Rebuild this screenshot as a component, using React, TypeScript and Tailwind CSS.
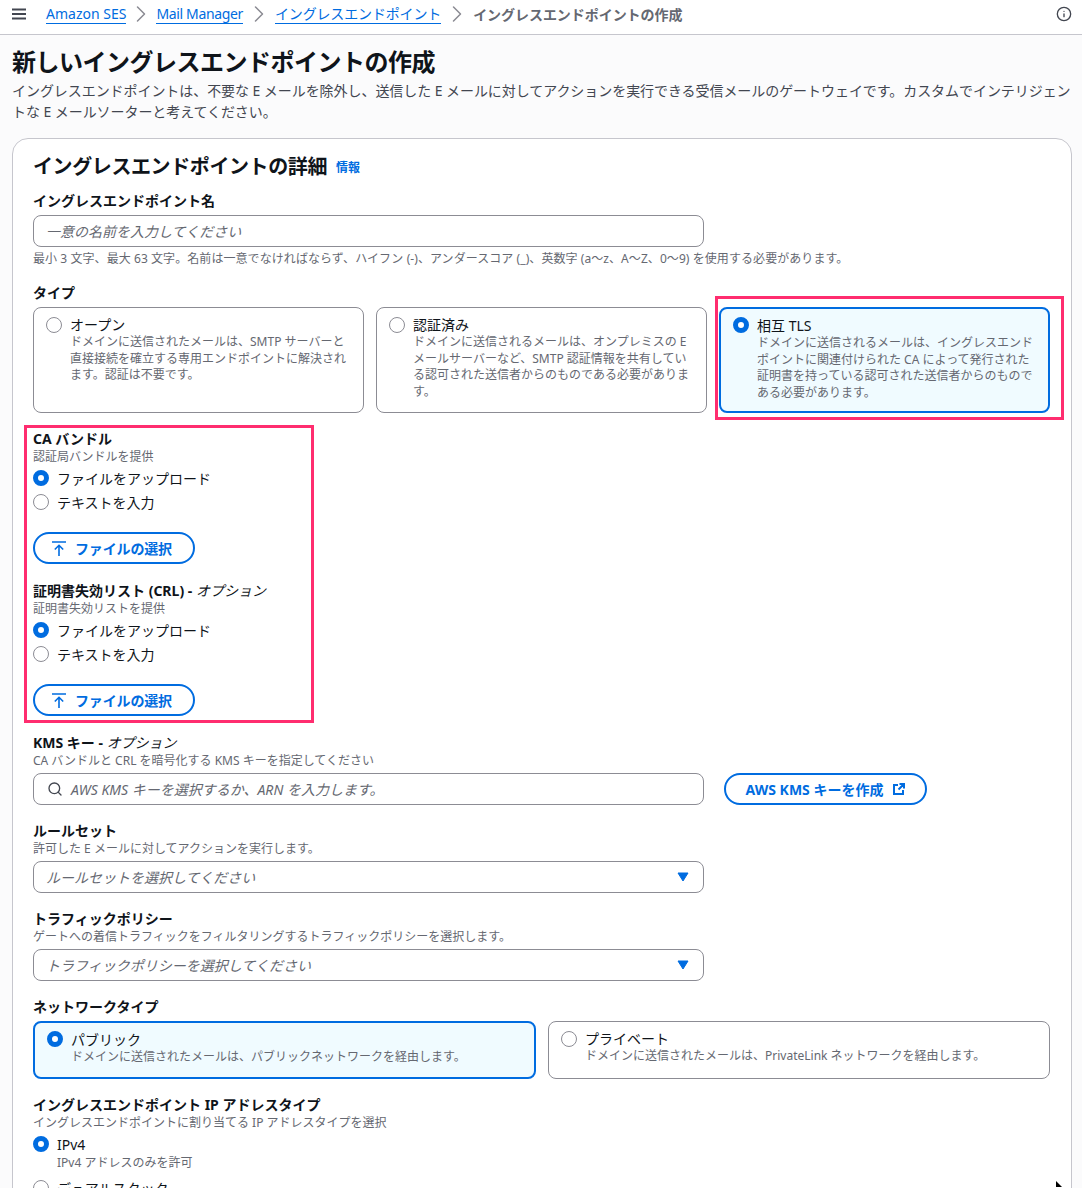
// New ingress endpoint form (SES Mail Manager), with the two pink review annotations on top.
import { ChevronRight, Info, Search } from 'lucide-react'

const FONT = { fontFamily: '"Noto Sans", "Noto Sans CJK JP", sans-serif' }

function Radio({ on }: { on?: boolean }) {
  return on ? (
    <span className="block w-4 h-4 shrink-0 rounded-full border-[5px] border-[#006ce0] bg-white" />
  ) : (
    <span className="block w-4 h-4 shrink-0 rounded-full border border-[#8c8c94] bg-white" />
  )
}

function Label({ children, className = '' }: { children: React.ReactNode; className?: string }) {
  return <div className={`text-[14px] leading-[20px] font-bold text-[#0f141a] ${className}`}>{children}</div>
}

function Sub({ children }: { children: React.ReactNode }) {
  return <div className="text-[12px] leading-[16px] text-[#656871]">{children}</div>
}

function TypeCard({ title, text, on }: { title: string; text: string; on?: boolean }) {
  return (
    <div
      className={`flex gap-2 rounded-lg pl-3 pr-3 pt-[8px] ${
        on ? 'border-2 border-[#006ce0] bg-[#f0fbff]' : 'border border-[#8c8c94] bg-white'
      }`}
    >
      <div className={on ? '' : 'mt-[1px]'}>
        <Radio on={on} />
      </div>
      <div>
        <div className="text-[14px] leading-[18px] text-[#0f141a]">{title}</div>
        <div className="text-[12px] leading-[16.5px] text-[#656871]">{text}</div>
      </div>
    </div>
  )
}

function RadioRow({ label, on }: { label: string; on?: boolean }) {
  return (
    <div className="flex items-center gap-2 h-6 text-[14px] text-[#0f141a]">
      <Radio on={on} />
      <span>{label}</span>
    </div>
  )
}

function UploadGroup() {
  return (
    <>
      <div className="mt-[1px]">
        <RadioRow label="ファイルをアップロード" on />
        <RadioRow label="テキストを入力" />
      </div>
      <button className="mt-[18px] flex items-center h-8 w-[162px] pl-[17px] rounded-full border-2 border-[#006ce0] text-[#006ce0] text-[14px] font-bold tracking-[-0.15px] bg-white">
        <svg width="14" height="15" viewBox="0 0 14 15" fill="none" stroke="#006ce0" strokeWidth="1.6" className="mr-[9px]">
          <path d="M0 1h14M7 15V4.5M2.8 8.5L7 4.3l4.2 4.2" />
        </svg>
        ファイルの選択
      </button>
    </>
  )
}

function Select({ placeholder }: { placeholder: string }) {
  return (
    <div className="flex items-center justify-between w-[671px] h-8 rounded-lg border border-[#8c8c94] bg-white pl-3 pr-[14px] text-[14px] italic text-[#656871]">
      <span>{placeholder}</span>
      <svg width="12" height="10" viewBox="0 0 12 10">
        <path d="M1 1h10L6 9z" fill="#006ce0" stroke="#006ce0" strokeLinejoin="round" />
      </svg>
    </div>
  )
}

export default function App() {
  return (
    <div className="relative w-[1082px] h-[1188px] overflow-hidden bg-[#fbfbfc]" style={FONT}>
      <header className="flex items-center justify-between h-[35px] pb-[6px] pl-3 pr-[10px] bg-white border-b border-[#c6c6cd] text-[14px]">
        <div className="flex items-center">
          <svg width="14" height="12" viewBox="0 0 14 12" className="mr-5">
            <path d="M0 1.5h14M0 6h14M0 10.5h14" stroke="#424650" strokeWidth="2" />
          </svg>
          <a className="text-[#006ce0] border-b border-[#006ce0] leading-[18px]">Amazon SES</a>
          <ChevronRight size={28} className="text-[#8c8c94] mx-[1px]" strokeWidth={1.3} />
          <a className="text-[#006ce0] border-b border-[#006ce0] leading-[18px] tracking-[-0.35px]">Mail Manager</a>
          <ChevronRight size={28} className="text-[#8c8c94] mx-[2px]" strokeWidth={1.3} />
          <a className="text-[#006ce0] border-b border-[#006ce0] leading-[18px] tracking-[-0.15px]">イングレスエンドポイント</a>
          <ChevronRight size={28} className="text-[#8c8c94] mx-[2px]" strokeWidth={1.3} />
          <span className="text-[#656871] font-semibold tracking-[-0.05px]">イングレスエンドポイントの作成</span>
        </div>
        <Info size={16} className="text-[#424650]" strokeWidth={2} />
      </header>

      <main className="pl-3 pt-[11px]">
        <h1 className="text-[24px] leading-[32px] font-bold tracking-[-0.5px] text-[#0f141a]">新しいイングレスエンドポイントの作成</h1>
        <p className="text-[14px] leading-[21px] text-[#424650] w-[1060px] mt-[2px] tracking-[-0.06px]">
          イングレスエンドポイントは、不要な E メールを除外し、送信した E メールに対してアクションを実行できる受信メールのゲートウェイです。カスタムでインテリジェントな E メールソーターと考えてください。
        </p>

        <section className="mt-[16px] w-[1060px] h-[1100px] rounded-t-2xl border border-[#c6c6cd] bg-white px-5 pt-[16px]">
          <div className="flex items-center gap-[9px]">
            <h2 className="text-[20px] leading-[24px] font-bold tracking-[-0.4px] text-[#0f141a]">イングレスエンドポイントの詳細</h2>
            <a className="text-[12px] font-bold text-[#006ce0] mt-[2px]">情報</a>
          </div>

          <Label className="mt-[12px]">イングレスエンドポイント名</Label>
          <div className="flex items-center mt-[4px] w-[671px] h-8 rounded-lg border border-[#8c8c94] bg-white pl-3 text-[14px] italic text-[#656871]">
            一意の名前を入力してください
          </div>
          <div className="mt-[4px] text-[12px] leading-[16px] text-[#656871] tracking-[0.07px]">
            最小 3 文字、最大 63 文字。名前は一意でなければならず、ハイフン (-)、アンダースコア (_)、英数字 (a〜z、A〜Z、0〜9) を使用する必要があります。
          </div>

          <Label className="mt-[16px]">タイプ</Label>
          <div className="mt-[4px] grid grid-cols-[331px_331px_331px] gap-3 h-[106px]">
            <TypeCard
              title="オープン"
              text="ドメインに送信されたメールは、SMTP サーバーと直接接続を確立する専用エンドポイントに解決されます。認証は不要です。"
            />
            <TypeCard
              title="認証済み"
              text="ドメインに送信されるメールは、オンプレミスの E メールサーバーなど、SMTP 認証情報を共有している認可された送信者からのものである必要があります。"
            />
            <TypeCard
              on
              title="相互 TLS"
              text="ドメインに送信されるメールは、イングレスエンドポイントに関連付けられた CA によって発行された証明書を持っている認可された送信者からのものである必要があります。"
            />
          </div>

          <Label className="mt-[16px]">CA バンドル</Label>
          <Sub>認証局バンドルを提供</Sub>
          <UploadGroup />

          <Label className="mt-[17px]">
            証明書失効リスト (CRL) - <span className="font-normal italic">オプション</span>
          </Label>
          <Sub>証明書失効リストを提供</Sub>
          <UploadGroup />

          <Label className="mt-[17px]">
            KMS キー - <span className="font-normal italic">オプション</span>
          </Label>
          <Sub>CA バンドルと CRL を暗号化する KMS キーを指定してください</Sub>
          <div className="flex items-center gap-5 mt-[4px]">
            <div className="flex items-center gap-[8px] w-[671px] h-8 rounded-lg border border-[#8c8c94] bg-white pl-[13px] text-[14px] italic text-[#656871]">
              <Search size={16} strokeWidth={2} className="text-[#424650]" />
              AWS KMS キーを選択するか、ARN を入力します。
            </div>
            <button className="flex items-center justify-center gap-[10px] w-[203px] h-8 rounded-full border-2 border-[#006ce0] text-[#006ce0] text-[14px] font-bold bg-white">
              AWS KMS キーを作成
              <svg width="12" height="12" viewBox="0 0 12 12" fill="none" stroke="#006ce0" strokeWidth="2">
                <path d="M5 2H1v9h9V7M5.5 6.5L11 1M6.5 1H11v4.5" />
              </svg>
            </button>
          </div>

          <Label className="mt-[16px]">ルールセット</Label>
          <Sub>許可した E メールに対してアクションを実行します。</Sub>
          <div className="mt-[4px]">
            <Select placeholder="ルールセットを選択してください" />
          </div>

          <Label className="mt-[16px]">トラフィックポリシー</Label>
          <Sub>ゲートへの着信トラフィックをフィルタリングするトラフィックポリシーを選択します。</Sub>
          <div className="mt-[4px]">
            <Select placeholder="トラフィックポリシーを選択してください" />
          </div>

          <Label className="mt-[16px]">ネットワークタイプ</Label>
          <div className="mt-[4px] grid grid-cols-[503px_502px] gap-3 h-[58px]">
            <TypeCard on title="パブリック" text="ドメインに送信されたメールは、パブリックネットワークを経由します。" />
            <TypeCard title="プライベート" text="ドメインに送信されたメールは、PrivateLink ネットワークを経由します。" />
          </div>

          <Label className="mt-[16px]">イングレスエンドポイント IP アドレスタイプ</Label>
          <Sub>イングレスエンドポイントに割り当てる IP アドレスタイプを選択</Sub>
          <div className="mt-[1px]">
            <RadioRow label="IPv4" on />
            <div className="pl-6 text-[12px] leading-[16px] text-[#656871] mt-[-1px]">IPv4 アドレスのみを許可</div>
            <div className="mt-[5px]">
              <RadioRow label="デュアルスタック" />
            </div>
          </div>
        </section>
      </main>

      {/* review annotations */}
      <div className="absolute left-[715px] top-[296px] w-[349px] h-[124px] border-[3px] border-[#ff2d6f] pointer-events-none" />
      <div className="absolute left-[24px] top-[425px] w-[290px] h-[298px] border-[3px] border-[#ff2d6f] pointer-events-none" />
      <svg className="absolute left-[1056px] top-[1181px]" width="8" height="8" viewBox="0 0 8 8">
        <path d="M0 0l6 6H0z" fill="#000" />
      </svg>
    </div>
  )
}
